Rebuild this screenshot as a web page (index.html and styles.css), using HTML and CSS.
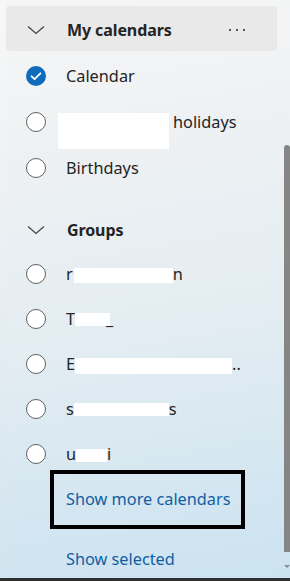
FILE: index.html
```html
<!DOCTYPE html>
<html>
<head>
<meta charset="utf-8">
<link rel="stylesheet" href="styles.css">
</head>
<body>
<div class="page">
  <div class="edge"></div>
  <div class="panel">
    <div class="section-head mine">
      <svg class="chev" width="18" height="10" viewBox="0 0 18 10"><path d="M1 1.5 L9 8.5 L17 1.5" fill="none" stroke="#424242" stroke-width="1.2"/></svg>
      <span class="head-title">My calendars</span>
      <span class="more">
        <i></i><i></i><i></i>
      </span>
    </div>
    <div class="row first">
      <span class="check">
        <svg width="20" height="20" viewBox="0 0 20 20"><circle cx="10" cy="10" r="10" fill="#0f6cbd"/><path d="M5.6 10.3 L8.6 13.1 L14.4 7.3" fill="none" stroke="#fff" stroke-width="1.8" stroke-linecap="round" stroke-linejoin="round"/></svg>
      </span>
      <span class="label">Calendar</span>
    </div>
    <div class="row">
      <span class="radio"></span>
      <span class="label"><span class="redact r-hol"></span>holidays</span>
    </div>
    <div class="row">
      <span class="radio"></span>
      <span class="label">Birthdays</span>
    </div>
    <div class="section-head groups">
      <svg class="chev" width="18" height="10" viewBox="0 0 18 10"><path d="M1 1.5 L9 8.5 L17 1.5" fill="none" stroke="#424242" stroke-width="1.2"/></svg>
      <span class="head-title">Groups</span>
    </div>
    <div class="row g">
      <span class="radio"></span>
      <span class="label">r<span class="redact r-1"></span>n</span>
    </div>
    <div class="row g">
      <span class="radio"></span>
      <span class="label">T<span class="redact r-2"></span><span class="tail">_</span></span>
    </div>
    <div class="row g">
      <span class="radio"></span>
      <span class="label">E<span class="redact r-3"></span>..</span>
    </div>
    <div class="row g">
      <span class="radio"></span>
      <span class="label">s<span class="redact r-4"></span>s</span>
    </div>
    <div class="row g">
      <span class="radio"></span>
      <span class="label">u<span class="redact r-5"></span><span class="tail-i">i</span></span>
    </div>
    <div class="row link-row">
      <span class="link">Show more calendars</span>
      <span class="annot"></span>
    </div>
    <div class="row link-row selected">
      <span class="link">Show selected</span>
    </div>
  </div>
  <div class="scroll">
    <div class="thumb"></div>
    <div class="arrow"></div>
  </div>
</div>
</body>
</html>
```
FILE: styles.css
```css
html, body {
  margin: 0;
  padding: 0;
  width: 290px;
  height: 581px;
  overflow: hidden;
}
body {
  font-family: "Noto Sans", "Open Sans", sans-serif;
  color: #242424;
}
.page {
  box-sizing: border-box;
  width: 290px;
  height: 581px;
  display: flex;
  border-bottom: 3px solid #2f2f2f;
  background: linear-gradient(170deg, #f6f6f6 0%, #eef1f3 25%, #e4edf2 55%, #d3e6f1 85%, #cbe3f0 100%);
  overflow: hidden;
}
.edge {
  width: 6px;
  flex: none;
  background: linear-gradient(180deg, #f7f7f7 0%, #ecf0f3 40%, #d2e4ee 100%);
}
.panel {
  width: 272px;
  flex: none;
  padding-top: 6px;
  display: flex;
  flex-direction: column;
  position: relative;
}
.section-head {
  height: 45px;
  display: flex;
  align-items: center;
  flex: none;
}
.section-head.mine {
  background: #e9e9e9;
  border-radius: 4px;
  width: 271px;
  margin-bottom: 2px;
}
.chev {
  margin-left: 21px;
  margin-right: 22px;
  flex: none;
  position: relative;
  top: 1px;
}
.head-title {
  font-weight: 700;
  font-size: 16px;
  letter-spacing: -0.1px;
  position: relative;
  top: 1px;
}
.more {
  margin-left: auto;
  margin-right: 32px;
  display: flex;
  gap: 5px;
  position: relative;
  top: 1px;
}
.more i {
  display: block;
  width: 2px;
  height: 2px;
  background: #555;
}
.row {
  height: 46px;
  display: flex;
  align-items: center;
  flex: none;
}
.row.g {
  height: 45px;
}
.section-head.groups {
  height: 44px;
  margin-top: 16px;
}
.check {
  width: 20px;
  height: 20px;
  margin-left: 20px;
  margin-right: 20px;
  flex: none;
  display: block;
}
.check svg { display: block; }
.radio {
  box-sizing: border-box;
  width: 20px;
  height: 20px;
  border: 1px solid #616161;
  border-radius: 50%;
  margin-left: 20px;
  margin-right: 20px;
  flex: none;
  background: #fff;
}
.label {
  font-size: 16.3px;
  display: flex;
  align-items: center;
  white-space: nowrap;
}
.redact {
  display: inline-block;
  background: #fff;
  flex: none;
}
.r-hol {
  width: 111px;
  height: 36px;
  margin-left: -8px;
  margin-right: 4px;
  transform: translateY(9px);
}
.r-1 { width: 99px; height: 15px; transform: translateY(2px); margin-left: 1px; }
.r-2 { width: 35px; height: 13px; transform: translateY(1px); }
.r-3 { width: 157px; height: 16px; transform: translateY(2px); }
.r-4 { width: 95px; height: 13px; transform: translateY(1px); }
.r-5 { width: 31px; height: 13px; transform: translateY(2px); }
.tail { margin-left: -4px; }
.tail-i { margin-left: 0; }
.link-row {
  position: relative;
  height: 45px;
}
.link {
  margin-left: 60px;
  font-size: 16.3px;
  color: #115ea3;
}
.annot {
  position: absolute;
  left: 44px;
  top: -6px;
  width: 187px;
  height: 51px;
  border: 4px solid #000;
}
.link-row.selected {
  margin-top: 15px;
}
.scroll {
  width: 6px;
  margin-left: 6px;
  flex: none;
  display: flex;
  flex-direction: column;
  align-items: center;
}
.thumb {
  margin-top: 145px;
  width: 6px;
  height: 407px;
  background: #858585;
  border-radius: 3px 3px 0 0;
}
.arrow {
  margin-top: 13px;
  width: 0;
  height: 0;
  border-left: 3px solid transparent;
  border-right: 3px solid transparent;
  border-top: 3px solid #8a8a8a;
}
```
